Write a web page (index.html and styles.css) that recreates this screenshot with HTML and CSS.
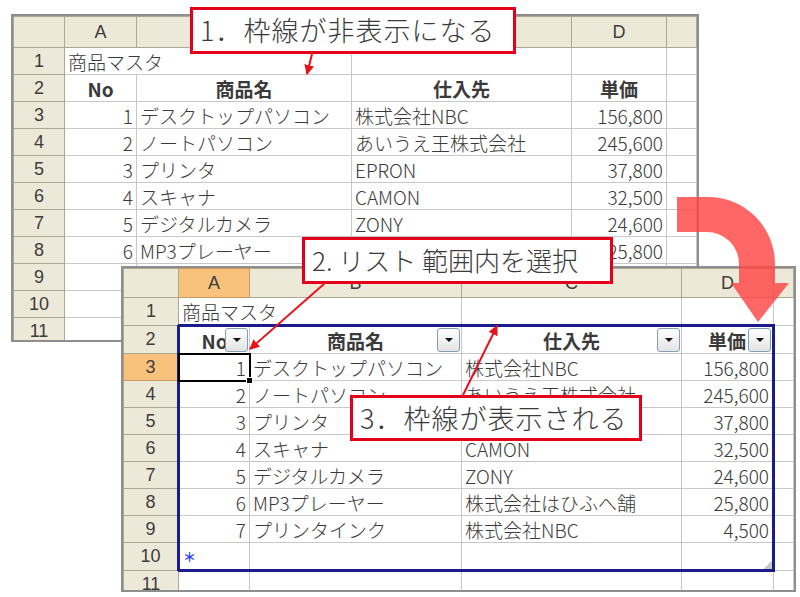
FILE: index.html
```html
<!DOCTYPE html>
<html lang="ja">
<head>
    <meta charset="UTF-8">
    <title>テーブルの枠線</title>
    <link rel="stylesheet" href="styles.css">
</head>
<body>
<div class="canvas">

    <!-- before: gridlines hidden -->
    <div class="sheet sheet-before">
        <table class="grid">
            <colgroup>
                <col style="width: 51px"><col style="width: 72px"><col style="width: 215px">
                <col style="width: 220px"><col style="width: 95px"><col style="width: 30px">
            </colgroup>
            <tr class="head"><th class="corner"></th><th>A</th><th>B</th><th>C</th><th>D</th><th></th></tr>
            <tr><th>1</th><td colspan="2">商品マスタ</td><td></td><td></td><td></td></tr>
            <tr><th>2</th><td class="title">No</td><td class="title">商品名</td><td class="title">仕入先</td><td class="title">単価</td><td></td></tr>
            <tr><th>3</th><td class="num">1</td><td>デスクトップパソコン</td><td>株式会社NBC</td><td class="num">156,800</td><td></td></tr>
            <tr><th>4</th><td class="num">2</td><td>ノートパソコン</td><td>あいうえ王株式会社</td><td class="num">245,600</td><td></td></tr>
            <tr><th>5</th><td class="num">3</td><td>プリンタ</td><td>EPRON</td><td class="num">37,800</td><td></td></tr>
            <tr><th>6</th><td class="num">4</td><td>スキャナ</td><td>CAMON</td><td class="num">32,500</td><td></td></tr>
            <tr><th>7</th><td class="num">5</td><td>デジタルカメラ</td><td>ZONY</td><td class="num">24,600</td><td></td></tr>
            <tr><th>8</th><td class="num">6</td><td>MP3プレーヤー</td><td>株式会社はひふへ舗</td><td class="num">25,800</td><td></td></tr>
            <tr><th>9</th><td class="num">7</td><td>プリンタインク</td><td>株式会社NBC</td><td class="num">4,500</td><td></td></tr>
            <tr><th>10</th><td></td><td></td><td></td><td></td><td></td></tr>
            <tr><th>11</th><td></td><td></td><td></td><td></td><td></td></tr>
        </table>
    </div>

    <!-- after: list range -->
    <div class="sheet sheet-after">
        <table class="grid">
            <colgroup>
                <col style="width: 55px"><col style="width: 71px"><col style="width: 212px">
                <col style="width: 220px"><col style="width: 92px"><col style="width: 20px">
            </colgroup>
            <tr class="head"><th class="corner"></th><th class="active">A</th><th>B</th><th>C</th><th>D</th><th></th></tr>
            <tr><th>1</th><td colspan="2">商品マスタ</td><td></td><td></td><td></td></tr>
            <tr>
                <th>2</th>
                <td class="title l-top l-left">No<span class="pick"></span></td>
                <td class="title l-top">商品名<span class="pick"></span></td>
                <td class="title l-top">仕入先<span class="pick"></span></td>
                <td class="title l-top l-right">単価<span class="pick"></span></td>
                <td></td>
            </tr>
            <tr><th class="active">3</th><td class="num l-left current">1</td><td>デスクトップパソコン</td><td>株式会社NBC</td><td class="num l-right">156,800</td><td></td></tr>
            <tr><th>4</th><td class="num l-left">2</td><td>ノートパソコン</td><td>あいうえ王株式会社</td><td class="num l-right">245,600</td><td></td></tr>
            <tr><th>5</th><td class="num l-left">3</td><td>プリンタ</td><td>EPRON</td><td class="num l-right">37,800</td><td></td></tr>
            <tr><th>6</th><td class="num l-left">4</td><td>スキャナ</td><td>CAMON</td><td class="num l-right">32,500</td><td></td></tr>
            <tr><th>7</th><td class="num l-left">5</td><td>デジタルカメラ</td><td>ZONY</td><td class="num l-right">24,600</td><td></td></tr>
            <tr><th>8</th><td class="num l-left">6</td><td>MP3プレーヤー</td><td>株式会社はひふへ舗</td><td class="num l-right">25,800</td><td></td></tr>
            <tr><th>9</th><td class="num l-left">7</td><td>プリンタインク</td><td>株式会社NBC</td><td class="num l-right">4,500</td><td></td></tr>
            <tr>
                <th>10</th>
                <td class="l-left l-bottom"><span class="new-row">＊</span></td>
                <td class="l-bottom"></td>
                <td class="l-bottom"></td>
                <td class="l-bottom l-right"><span class="resize"></span></td>
                <td></td>
            </tr>
            <tr><th>11</th><td></td><td></td><td></td><td></td><td></td></tr>
        </table>
    </div>

    <div class="callout callout-1">1．枠線が非表示になる</div>
    <div class="callout callout-2">2. リスト 範囲内を選択</div>
    <div class="callout callout-3">3．枠線が表示される</div>

    <svg class="marks" width="800" height="597" viewBox="0 0 800 597">
        <defs>
            <marker id="tip" viewBox="0 0 10 10" refX="9" refY="5" markerWidth="5" markerHeight="5" orient="auto">
                <path d="M0 0L10 5L0 10z" fill="#e8121b"/>
            </marker>
        </defs>
        <path class="bend" d="M677 197H708A67 67 0 0 1 775 264V283H789L758 322L731 283H739V264A32 32 0 0 0 707 232H677Z"/>
        <line class="pointer" x1="312" y1="54" x2="307" y2="74" marker-end="url(#tip)"/>
        <line class="pointer" x1="324" y1="284" x2="250" y2="349" marker-end="url(#tip)"/>
        <line class="pointer" x1="463" y1="395" x2="497" y2="326" marker-end="url(#tip)"/>
    </svg>
</div>
</body>
</html>
```

FILE: styles.css
```css
body {
    margin: 0;
    background: #fff;
    font-family: "Noto Sans CJK JP", sans-serif;
}
.canvas {
    position: relative;
    width: 800px;
    height: 597px;
    overflow: hidden;
}

/* sheets */
.sheet {
    position: absolute;
    background: #fff;
    border: 2px solid #8e8e8e;
    overflow: hidden;
}
.sheet-before {
    left: 11px;
    top: 14px;
    height: 324px;
}
.sheet-after {
    left: 121px;
    top: 266px;
    height: 322px;
}
.grid {
    border-collapse: collapse;
    table-layout: fixed;
    width: 1px;
}
.grid th,
.grid td {
    height: 26px;
    padding: 0 3px;
    border: 1px solid #c8c8c8;
    font-size: 19px;
    font-weight: 300;
    line-height: 25px;
    white-space: nowrap;
    overflow: visible;
    color: #3a3a3a;
    text-align: left;
    position: relative;
}
.grid th {
    background: #ece9d8;
    border-color: #aca896;
    font-family: "Liberation Sans", "DejaVu Sans", sans-serif;
    font-weight: normal;
    font-size: 18px;
    color: #3c3c3c;
    text-align: center;
}
.grid .head th {
    height: 30px;
}
.sheet-after .head th {
    height: 28px;
}
.grid th.active {
    background: #f9c27c;
    border-color: #c99b5f;
}
.grid td.title {
    font-weight: bold;
    text-align: center;
}
.grid td.num {
    text-align: right;
}

/* list range */
.grid td.l-top { border-top: 3px solid #1b1b8e; }
.grid td.l-left { border-left: 3px solid #1b1b8e; }
.grid td.l-right { border-right: 3px solid #1b1b8e; }
.grid td.l-bottom { border-bottom: 3px solid #1b1b8e; }

.pick {
    position: absolute;
    right: 1px;
    top: 1px;
    width: 21px;
    height: 22px;
    border: 1px solid #7f9db9;
    border-radius: 3px;
    background: linear-gradient(#ffffff, #e4e4e4);
}
.pick::after {
    content: "";
    position: absolute;
    left: 7px;
    top: 9px;
    border-left: 4px solid transparent;
    border-right: 4px solid transparent;
    border-top: 4px solid #111;
}
.grid td.current {
    outline: 2px solid #000;
    outline-offset: -1px;
}
.grid td.current::after {
    content: "";
    position: absolute;
    right: -4px;
    bottom: -4px;
    width: 5px;
    height: 5px;
    background: #000;
    border: 1px solid #fff;
}
.new-row {
    color: #2a3cff;
    font-size: 13px;
    font-weight: bold;
    vertical-align: top;
}
.resize {
    position: absolute;
    right: 0;
    bottom: 0;
    width: 8px;
    height: 8px;
    background: linear-gradient(135deg, transparent 50%, #c8c8c8 50%);
}

/* callouts */
.callout {
    position: absolute;
    box-sizing: border-box;
    height: 47px;
    padding: 0 7px;
    background: #fff;
    border: 3px solid #e4001b;
    font-size: 27px;
    font-weight: 300;
    letter-spacing: 1px;
    line-height: 40px;
    color: #3a3a3a;
    white-space: nowrap;
}
.callout-1 {
    left: 190px;
    top: 7px;
    width: 326px;
}
.callout-2 {
    left: 302px;
    top: 237px;
    width: 311px;
    letter-spacing: 0;
    font-size: 26px;
}
.callout-3 {
    left: 350px;
    top: 395px;
    width: 292px;
    height: 46px;
}

.marks {
    position: absolute;
    left: 0;
    top: 0;
    pointer-events: none;
}
.bend {
    fill: rgba(255, 70, 70, 0.82);
}
.pointer {
    stroke: #e8121b;
    stroke-width: 2;
}
```
